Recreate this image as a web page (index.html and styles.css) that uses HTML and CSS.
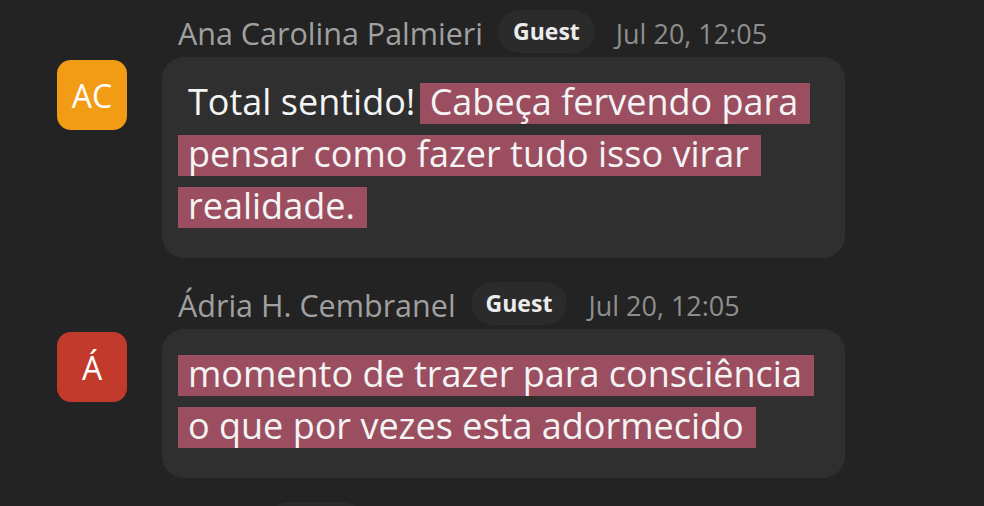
FILE: index.html
```html
<!DOCTYPE html>
<html lang="pt-BR">
<head>
<meta charset="utf-8">
<title>Chat</title>
<link rel="stylesheet" href="styles.css">
</head>
<body>
<main class="chat">
  <article class="message">
    <header class="meta">
      <span class="name">Ana Carolina Palmieri</span>
      <span class="badge">Guest</span>
      <time class="time">Jul 20, 12:05</time>
    </header>
    <div class="avatar avatar-orange">AC</div>
    <div class="bubble">
      <p class="text"><span class="lead">Total sentido!</span> <span class="hl">Cabeça fervendo para<br>pensar como fazer tudo isso virar<br>realidade.</span></p>
    </div>
  </article>

  <article class="message">
    <header class="meta">
      <span class="name">Ádria H. Cembranel</span>
      <span class="badge">Guest</span>
      <time class="time">Jul 20, 12:05</time>
    </header>
    <div class="avatar avatar-red">Á</div>
    <div class="bubble">
      <p class="text"><span class="hl">momento de trazer para consciência<br>o que por vezes esta adormecido</span></p>
    </div>
  </article>

  <article class="message">
    <header class="meta">
      <span class="name">Lúcia</span>
      <span class="badge">Guest</span>
      <time class="time">Jul 20, 12:06</time>
    </header>
  </article>
</main>
</body>
</html>
```

FILE: styles.css
```css
html, body {
  margin: 0;
  padding: 0;
  background: #232323;
  height: 100%;
  overflow: hidden;
}

body {
  font-family: "Open Sans", "Noto Sans", sans-serif;
  color: #f2f2f2;
}

.chat {
  display: flex;
  flex-direction: column;
  gap: 24px;
  padding: 10px 0 0 57px;
}

.message {
  display: grid;
  grid-template-columns: 70px 683px;
  column-gap: 35px;
}

.meta {
  grid-column: 2;
  grid-row: 1;
  display: flex;
  align-items: flex-start;
  padding-left: 16px;
}

.name {
  font-size: 30.5px;
  line-height: 47px;
  color: #a0a0a0;
  margin-right: 15px;
  white-space: nowrap;
}

.badge {
  height: 43px;
  padding: 0 15px;
  border-radius: 22px;
  background: #2b2b2b;
  color: #ececec;
  font-weight: 700;
  font-size: 23px;
  line-height: 42px;
  margin-right: 21px;
}

.time {
  font-size: 27px;
  line-height: 47px;
  color: #8e8e8e;
  white-space: nowrap;
}

.avatar {
  grid-column: 1;
  grid-row: 2;
  margin-top: 3px;
  width: 70px;
  height: 70px;
  border-radius: 14px;
  display: flex;
  align-items: center;
  justify-content: center;
  color: #ffffff;
  font-size: 32px;
}

.avatar-orange { background: #f29c16; }
.avatar-red { background: #c23a2b; }

.bubble {
  grid-column: 2;
  grid-row: 2;
  background: #2f2f2f;
  border-radius: 22px;
  padding: 19px 20px 26px 26px;
}

.text {
  margin: 0;
  font-size: 36px;
  line-height: 52px;
  color: #f4f4f4;
}

.lead {
  margin-right: 5px;
}

.hl {
  padding: 0 12px 0 10px;
  margin-left: -10px;
  -webkit-box-decoration-break: clone;
  box-decoration-break: clone;
  background: linear-gradient(#9b4e60, #9b4e60) 0 6px / 100% 41px no-repeat;
}
```
